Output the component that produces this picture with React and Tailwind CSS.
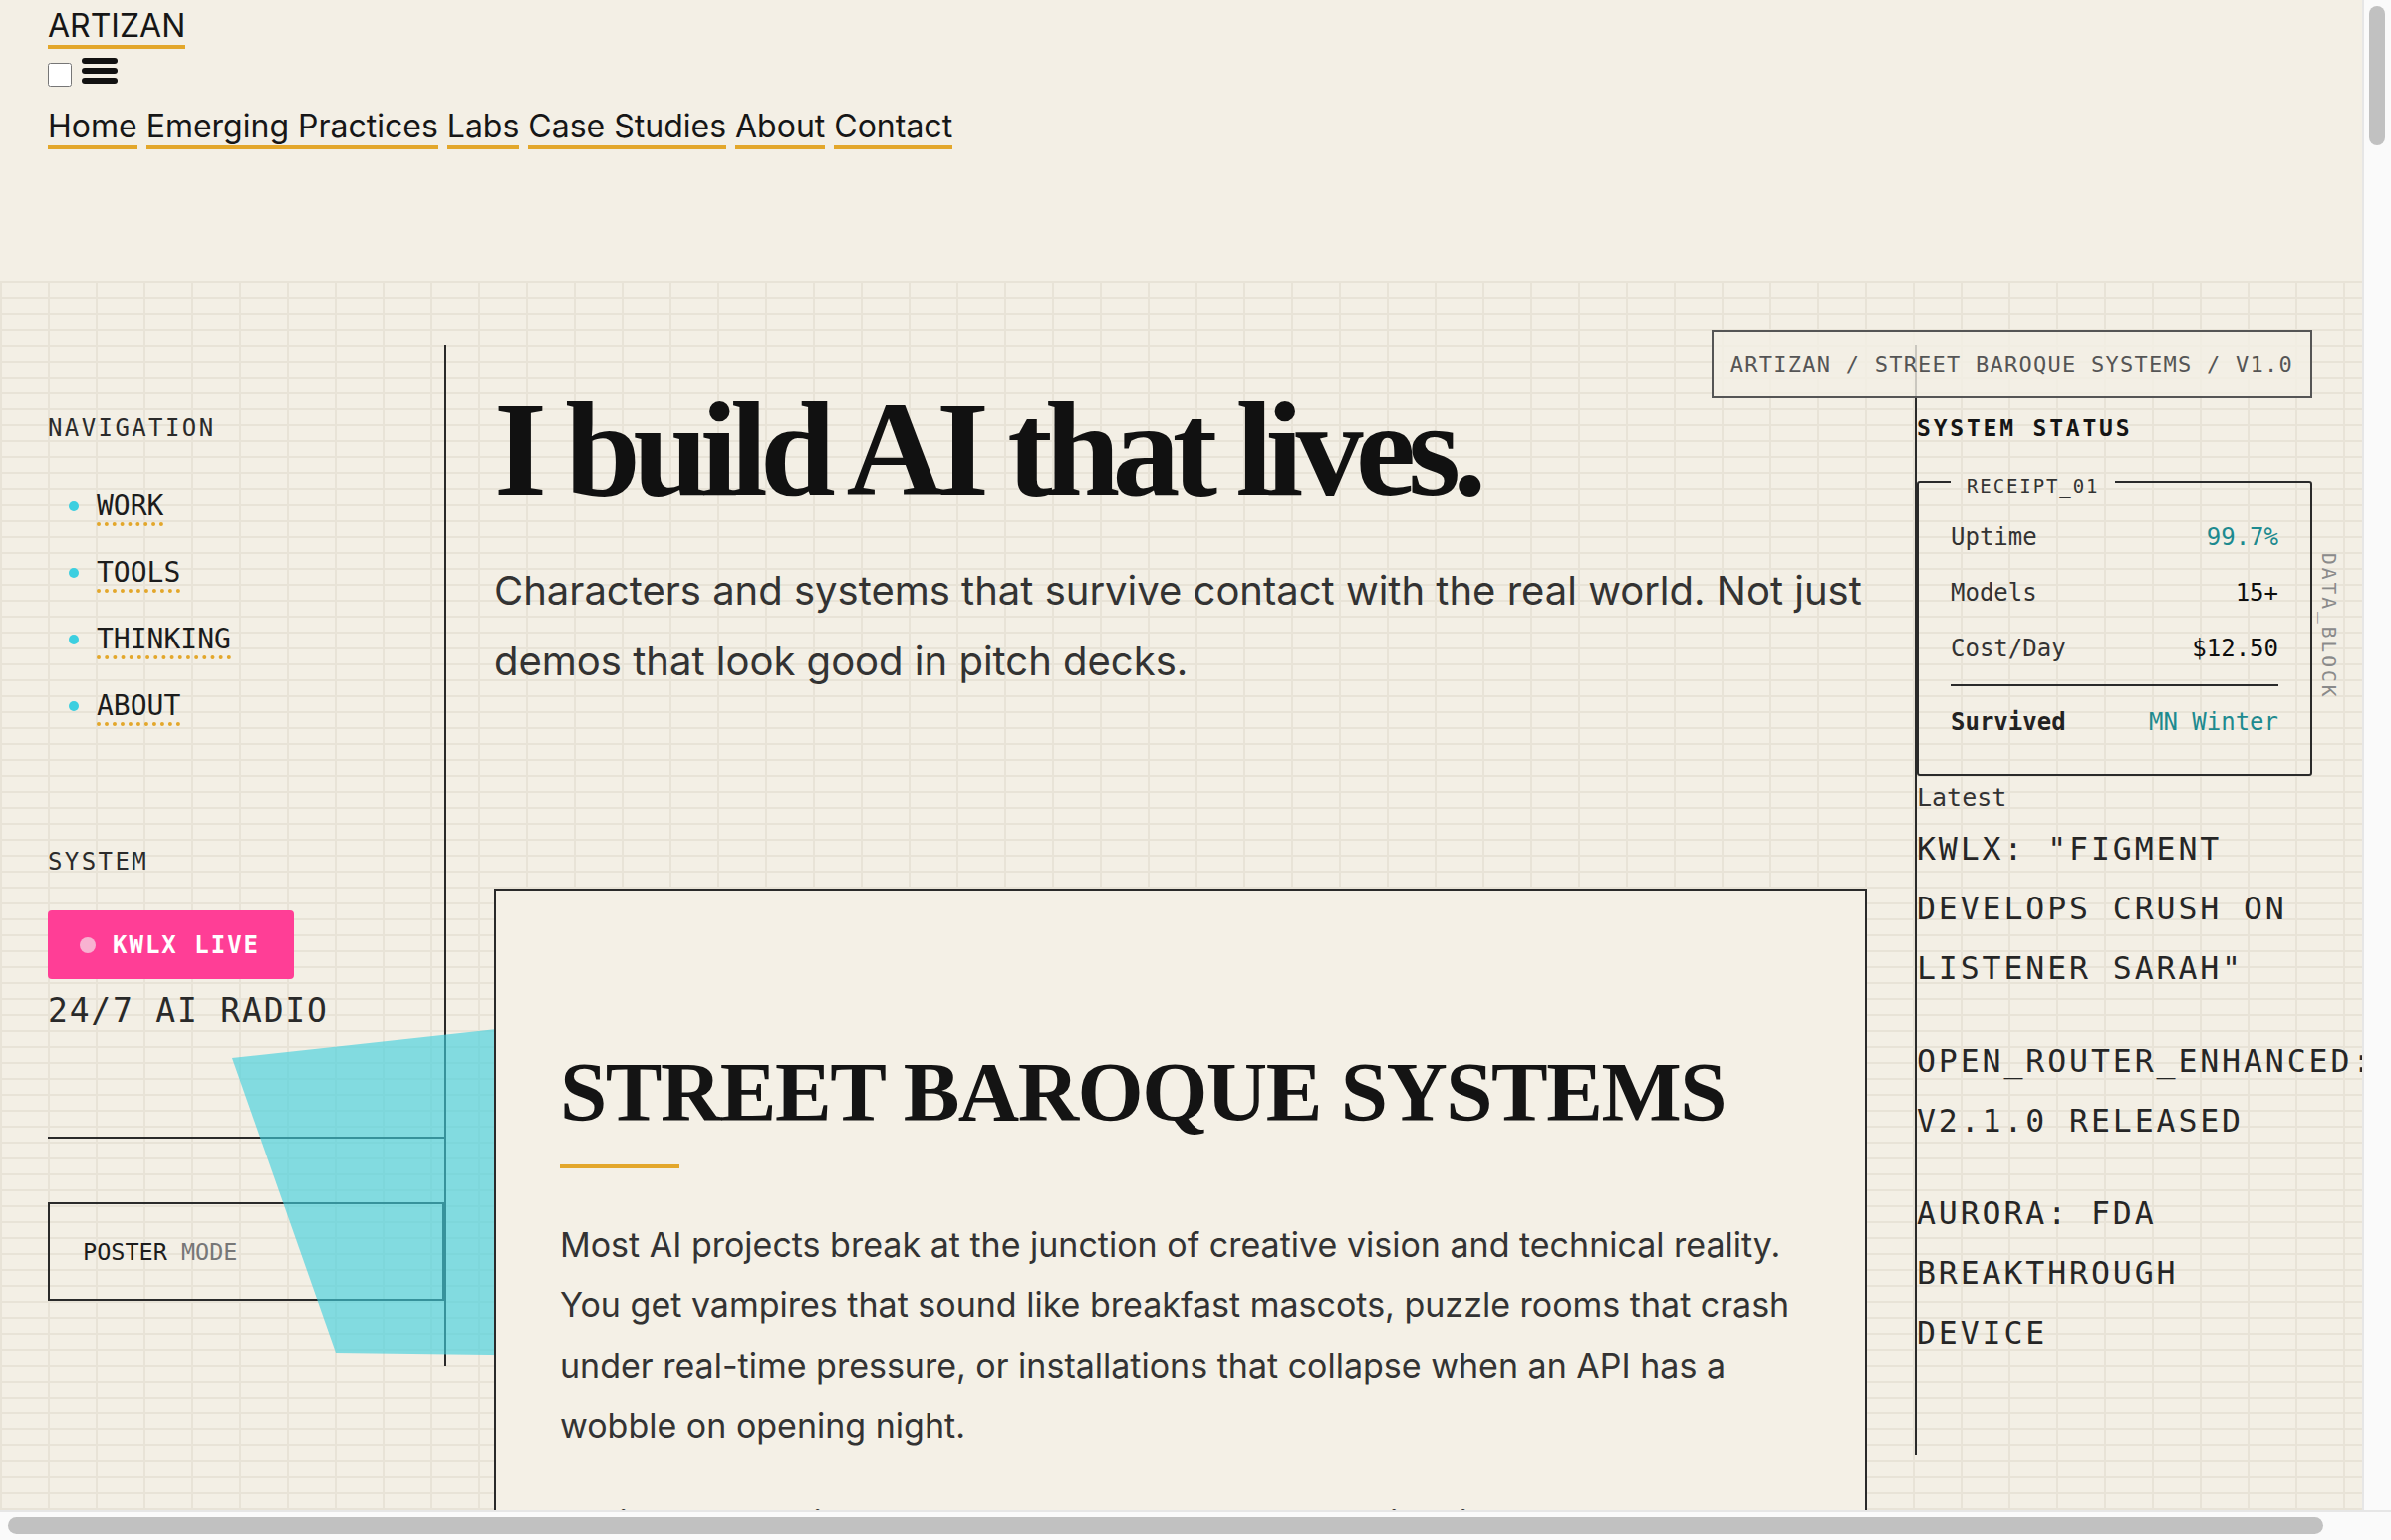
import React from "react";

const navLinks = ["Home", "Emerging Practices", "Labs", "Case Studies", "About", "Contact"];
const sideNav = ["WORK", "TOOLS", "THINKING", "ABOUT"];
const news = [
  'KWLX: "FIGMENT DEVELOPS CRUSH ON LISTENER SARAH"',
  "OPEN_ROUTER_ENHANCED: V2.1.0 RELEASED",
  "AURORA: FDA BREAKTHROUGH DEVICE",
];

function Header() {
  return (
    <header className="h-[282px] px-[48px] pt-[8px]">
      <div className="text-[32px] leading-[36px]">
        <a href="#" className="border-b-4 border-[#e3a72b] text-[#161616]">
          ARTIZAN
        </a>
      </div>
      <div className="flex h-[43px] gap-[10px]">
        <input type="checkbox" className="mt-[19px] h-[24px] w-[24px]" />
        <svg className="mt-[14px]" width="36" height="26" viewBox="0 0 36 26" fill="#111">
          <rect x="0" y="0" width="36" height="6" rx="3" />
          <rect x="0" y="10" width="36" height="6" rx="3" />
          <rect x="0" y="20" width="36" height="6" rx="3" />
        </svg>
      </div>
      <nav className="mt-[22px] text-[32px] leading-[36px] text-[#161616]">
        {navLinks.map((l, i) => (
          <React.Fragment key={l}>
            {i > 0 && " "}
            <a href="#" className="border-b-4 border-[#e3a72b]">
              {l}
            </a>
          </React.Fragment>
        ))}
      </nav>
    </header>
  );
}

function Sidebar() {
  return (
    <aside className="border-r-2 border-[#2a2a2a] pt-[68px] pb-[65px] font-['DejaVu_Sans_Mono',monospace] text-[#262626]">
      <div className="text-[24px] leading-[32px] tracking-[2.4px] text-[#2b2b2b]">NAVIGATION</div>
      <ul className="mt-[42px] flex flex-col gap-[27px]">
        {sideNav.map((n) => (
          <li key={n} className="flex h-[40px] items-center gap-[18px] pl-[21px]">
            <span className="h-[10px] w-[10px] rounded-full bg-[#3ccfe0]" />
            <a href="#" className="text-[28px] leading-[40px] text-[#1c1c1c]">
              <span className="border-b-4 border-dotted border-[#e3a72b]">{n}</span>
            </a>
          </li>
        ))}
      </ul>
      <div className="mt-[120px] text-[24px] leading-[32px] tracking-[2.4px] text-[#2b2b2b]">SYSTEM</div>
      <div className="mt-[33px] flex h-[69px] w-[247px] items-center gap-[17px] rounded-[4px] bg-[#ff3e96] pl-[32px]">
        <span className="h-[16px] w-[16px] rounded-full bg-[#f8b2d1]" />
        <span className="text-[24px] font-bold leading-[32px] tracking-[2px] text-white">KWLX LIVE</span>
      </div>
      <div className="mt-[10px] text-[33px] leading-[44px] tracking-[1.8px] text-[#2a2a2a]">24/7 AI RADIO</div>
      <div className="mt-[104px] h-[2px] bg-[#2a2a2a]" />
      <div className="mt-[64px] flex h-[99px] items-center border-2 border-[#2a2a2a] pl-[33px] text-[23.5px] leading-[32px]">
        <span className="text-[#1c1c1c]">POSTER</span>
        <span className="ml-[14px] text-[#777]">MODE</span>
      </div>
    </aside>
  );
}

function Center() {
  return (
    <section className="min-w-0">
      <h1 className="mt-[37px] whitespace-nowrap font-['Liberation_Serif',serif] text-[136px] font-bold leading-[136px] tracking-[-7.8px] text-[#111]">
        I build AI that lives.
      </h1>
      <p className="mt-[38px] text-[40px] leading-[71px] text-[#333]">
        Characters and systems that survive contact with the real world. Not just demos that look good in pitch decks.
      </p>
      <div className="relative z-20 mt-[193px] border-2 border-[#2a2a2a] bg-[#f4f0e6] px-[64px] pt-[156px] pb-[120px]">
        <h2 className="font-['Liberation_Serif',serif] text-[85px] font-bold leading-[93.5px] tracking-[-1.5px] text-[#141414]">
          STREET BAROQUE SYSTEMS
        </h2>
        <div className="mt-[25px] h-[4px] w-[120px] bg-[#e3a72b]" />
        <p className="mt-[47px] text-[34px] leading-[60.8px] text-[#333]">
          Most AI projects break at the junction of creative vision and technical reality. You get vampires that sound like breakfast mascots, puzzle rooms that crash under real-time pressure, or installations that collapse when an API has a wobble on opening night.
        </p>
        <p className="mt-[36px] text-[34px] leading-[60.8px] text-[#333]">
          I build the layer in between: characters that hold their voice under pressure, systems that degrade gracefully, and experiences that keep running when the lights come up and the audience walks in.
        </p>
      </div>
    </section>
  );
}

function RightColumn() {
  return (
    <aside className="border-l-2 border-[#2a2a2a] pt-[68px] pb-[93px] font-['DejaVu_Sans_Mono',monospace] text-[#2a2a2a]">
      <div className="text-[23px] font-bold leading-[32px] tracking-[2.8px] text-[#151515]">SYSTEM STATUS</div>
      <div className="relative mt-[22px]">
        <fieldset className="rounded-[3px] border-2 border-[#2a2a2a] px-[32px] pt-[19px] pb-[32px]">
          <legend className="px-[16px] pt-[8px] text-[19px] leading-[24px] tracking-[1.9px] text-[#333]">RECEIPT_01</legend>
          <div className="flex flex-col gap-[16px] text-[24px] leading-[40px]">
            <div className="flex justify-between">
              <span className="text-[#333]">Uptime</span>
              <span className="text-[#1d8a8f]">99.7%</span>
            </div>
            <div className="flex justify-between">
              <span className="text-[#333]">Models</span>
              <span className="text-[#0e0e0e]">15+</span>
            </div>
            <div className="flex justify-between">
              <span className="text-[#333]">Cost/Day</span>
              <span className="text-[#0e0e0e]">$12.50</span>
            </div>
          </div>
          <div className="mt-[16px] border-t-2 border-[#2a2a2a] pt-[16px]">
            <div className="flex justify-between text-[24px] leading-[40px]">
              <span className="font-bold text-[#222]">Survived</span>
              <span className="text-[#1d8a8f]">MN Winter</span>
            </div>
          </div>
        </fieldset>
        <div className="absolute left-[403px] top-[87px] text-[19.5px] leading-[20px] tracking-[3px] text-[#8a8a8a] [writing-mode:vertical-rl]">
          DATA_BLOCK
        </div>
      </div>
      <div className="mt-[6px] text-[25px] leading-[32px] text-[#333]">Latest</div>
      <div className="mt-[5px] flex flex-col gap-[33px]">
        {news.map((n) => (
          <div key={n} className="text-[31.5px] leading-[60px] tracking-[2.9px] text-[#262626]">
            {n}
          </div>
        ))}
      </div>
    </aside>
  );
}

export default function App() {
  return (
    <div className="flex h-screen w-screen flex-col overflow-hidden bg-[#fafafa] font-['Inter',sans-serif] text-[#1c1c1c]">
      <div className="flex min-h-0 flex-1">
        <div className="h-full min-w-0 flex-1 overflow-hidden bg-[#f3efe5]">
          <Header />
          <main className="relative grid grid-cols-[400px_minmax(0,1fr)_399px] items-start gap-x-[48px] pl-[48px] pr-[50px] pt-[64px] pb-[400px] [background-image:linear-gradient(to_right,#e8e3d7_2px,transparent_2px),linear-gradient(to_bottom,#e8e3d7_2px,transparent_2px)] [background-size:48px_16px]">
            <svg className="pointer-events-none absolute left-0 top-0 z-10" width="600" height="1100" viewBox="0 0 600 1100">
              <polygon points="233,780 580,742 580,1079 337,1076" fill="#3fcfdd" fillOpacity="0.63" />
            </svg>
            <div className="absolute right-[50px] top-[49px] z-30 flex h-[69px] items-center border-2 border-[#555] bg-[#f3efe5]/80 px-[17px] font-['DejaVu_Sans_Mono',monospace] text-[22px] leading-[30px] tracking-[1.25px] text-[#555]">
              ARTIZAN / STREET BAROQUE SYSTEMS / V1.0
            </div>
            <Sidebar />
            <Center />
            <RightColumn />
          </main>
        </div>
        <div className="w-[29px] shrink-0 border-l-2 border-[#e6e6e6] bg-[#fafafa] pt-[6px] pl-[5px]">
          <div className="h-[140px] w-[16px] rounded-full bg-[#c1c1c1]" />
        </div>
      </div>
      <div className="h-[30px] shrink-0 border-t-2 border-[#e6e6e6] bg-[#fafafa] pt-[5px] pl-[8px]">
        <div className="h-[17px] w-[2324px] rounded-full bg-[#c1c1c1]" />
      </div>
    </div>
  );
}
